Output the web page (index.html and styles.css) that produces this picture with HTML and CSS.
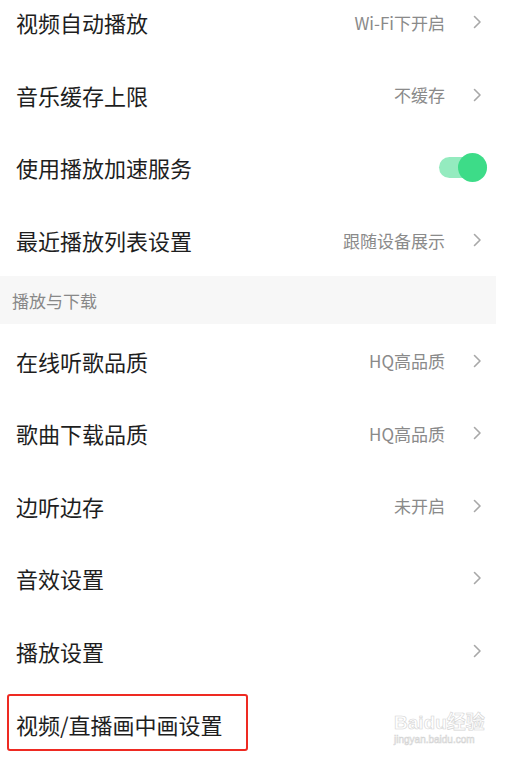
FILE: index.html
```html
<!DOCTYPE html>
<html lang="zh-CN">
<head>
    <meta charset="UTF-8">
    <meta name="viewport" content="width=device-width, initial-scale=1.0">
    <title>设置</title>
    <link rel="stylesheet" href="styles.css">
</head>
<body>
    <div class="settings">
        <div class="row">
            <span class="label">视频自动播放</span>
            <span class="value">Wi-Fi下开启</span>
            <svg class="chevron" width="9" height="14" viewBox="0 0 9 14"><path d="M1.5 1.5 L7 7 L1.5 12.5" fill="none" stroke="#a8a8a8" stroke-width="1.6" stroke-linecap="round" stroke-linejoin="round"/></svg>
        </div>
        <div class="row">
            <span class="label">音乐缓存上限</span>
            <span class="value">不缓存</span>
            <svg class="chevron" width="9" height="14" viewBox="0 0 9 14"><path d="M1.5 1.5 L7 7 L1.5 12.5" fill="none" stroke="#a8a8a8" stroke-width="1.6" stroke-linecap="round" stroke-linejoin="round"/></svg>
        </div>
        <div class="row">
            <span class="label">使用播放加速服务</span>
            <span class="switch"><span class="knob"></span></span>
        </div>
        <div class="row">
            <span class="label">最近播放列表设置</span>
            <span class="value">跟随设备展示</span>
            <svg class="chevron" width="9" height="14" viewBox="0 0 9 14"><path d="M1.5 1.5 L7 7 L1.5 12.5" fill="none" stroke="#a8a8a8" stroke-width="1.6" stroke-linecap="round" stroke-linejoin="round"/></svg>
        </div>

        <div class="section-title">播放与下载</div>

        <div class="row">
            <span class="label">在线听歌品质</span>
            <span class="value">HQ高品质</span>
            <svg class="chevron" width="9" height="14" viewBox="0 0 9 14"><path d="M1.5 1.5 L7 7 L1.5 12.5" fill="none" stroke="#a8a8a8" stroke-width="1.6" stroke-linecap="round" stroke-linejoin="round"/></svg>
        </div>
        <div class="row">
            <span class="label">歌曲下载品质</span>
            <span class="value">HQ高品质</span>
            <svg class="chevron" width="9" height="14" viewBox="0 0 9 14"><path d="M1.5 1.5 L7 7 L1.5 12.5" fill="none" stroke="#a8a8a8" stroke-width="1.6" stroke-linecap="round" stroke-linejoin="round"/></svg>
        </div>
        <div class="row">
            <span class="label">边听边存</span>
            <span class="value">未开启</span>
            <svg class="chevron" width="9" height="14" viewBox="0 0 9 14"><path d="M1.5 1.5 L7 7 L1.5 12.5" fill="none" stroke="#a8a8a8" stroke-width="1.6" stroke-linecap="round" stroke-linejoin="round"/></svg>
        </div>
        <div class="row">
            <span class="label">音效设置</span>
            <svg class="chevron" width="9" height="14" viewBox="0 0 9 14"><path d="M1.5 1.5 L7 7 L1.5 12.5" fill="none" stroke="#a8a8a8" stroke-width="1.6" stroke-linecap="round" stroke-linejoin="round"/></svg>
        </div>
        <div class="row">
            <span class="label">播放设置</span>
            <svg class="chevron" width="9" height="14" viewBox="0 0 9 14"><path d="M1.5 1.5 L7 7 L1.5 12.5" fill="none" stroke="#a8a8a8" stroke-width="1.6" stroke-linecap="round" stroke-linejoin="round"/></svg>
        </div>
        <div class="row">
            <span class="label">视频/直播画中画设置</span>
            <span class="highlight"></span>
            <span class="watermark">
                <span class="wm-main">Baidu经验</span>
                <span class="wm-sub">jingyan.baidu.com</span>
            </span>
        </div>
    </div>
</body>
</html>
```

FILE: styles.css
```css
body, html {
    margin: 0;
    padding: 0;
    background: #fff;
    overflow: hidden;
    font-family: "Noto Sans CJK SC", "Noto Sans", sans-serif;
}

.settings {
    width: 496px;
    margin-top: -14px;
}

.row {
    position: relative;
    height: 72.6px;
    display: flex;
    align-items: center;
    padding: 0 14px 0 16px;
    box-sizing: border-box;
}

.label {
    flex: 1;
    font-size: 22px;
    color: #1e1e1e;
}

.value {
    font-size: 17px;
    color: #8a8a8a;
    margin-right: 28px;
}

.chevron {
    display: block;
}

.switch {
    position: relative;
    width: 48px;
    height: 21px;
    margin-right: -5px;
    border-radius: 11px;
    background: #94ebbf;
}

.knob {
    position: absolute;
    top: -4px;
    right: 0;
    width: 29px;
    height: 29px;
    border-radius: 50%;
    background: #3ddc88;
}

.section-title {
    height: 48px;
    display: flex;
    align-items: center;
    padding-left: 12px;
    background: #f7f7f7;
    font-size: 17px;
    color: #888;
}

/* annotation box drawn over the last row */
.highlight {
    position: absolute;
    left: 7px;
    top: 7px;
    width: 241px;
    height: 57px;
    box-sizing: border-box;
    border: 2.5px solid #ee2a22;
    border-radius: 3px;
}

.watermark {
    position: absolute;
    left: 394px;
    top: 26px;
    display: flex;
    flex-direction: column;
    align-items: flex-start;
    white-space: nowrap;
    color: transparent;
    -webkit-text-stroke: 0.6px #d4d4d4;
    font-family: "Liberation Sans", "Noto Sans CJK SC", sans-serif;
    line-height: 1;
}

.wm-main {
    font-size: 19px;
    font-weight: bold;
}

.wm-sub {
    font-size: 10px;
    margin-top: 3px;
}
```
